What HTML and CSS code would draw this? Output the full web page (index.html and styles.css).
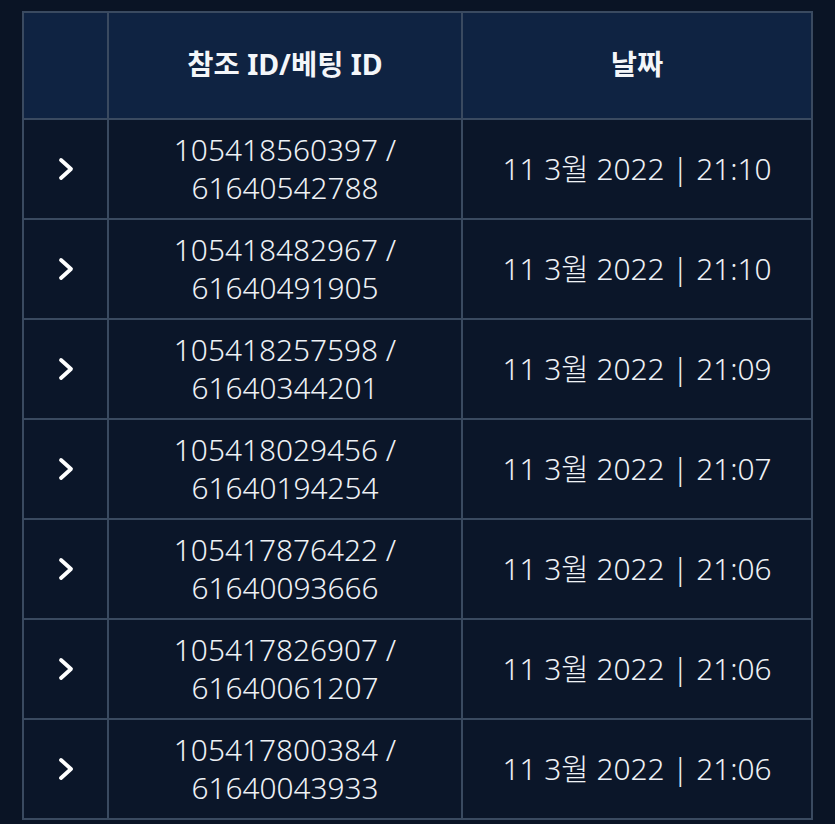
FILE: index.html
```html
<!DOCTYPE html>
<html lang="ko">
<head>
  <meta charset="UTF-8" />
  <meta name="viewport" content="width=device-width, initial-scale=1.0" />
  <title>베팅 내역</title>
  <link rel="stylesheet" href="styles.css">
</head>
<body>
  <div class="wrap">
    <table class="bets">
      <thead>
        <tr>
          <th class="col-toggle"></th>
          <th class="col-id">참조 ID/베팅 ID</th>
          <th class="col-date">날짜</th>
        </tr>
      </thead>
      <tbody>
        <tr>
          <td class="toggle"><svg viewBox="0 0 16 24" width="16" height="24"><path d="M3 3 L13 12 L3 21" /></svg></td>
          <td>105418560397 /<br>61640542788</td>
          <td>11 3월 2022 | 21:10</td>
        </tr>
        <tr>
          <td class="toggle"><svg viewBox="0 0 16 24" width="16" height="24"><path d="M3 3 L13 12 L3 21" /></svg></td>
          <td>105418482967 /<br>61640491905</td>
          <td>11 3월 2022 | 21:10</td>
        </tr>
        <tr>
          <td class="toggle"><svg viewBox="0 0 16 24" width="16" height="24"><path d="M3 3 L13 12 L3 21" /></svg></td>
          <td>105418257598 /<br>61640344201</td>
          <td>11 3월 2022 | 21:09</td>
        </tr>
        <tr>
          <td class="toggle"><svg viewBox="0 0 16 24" width="16" height="24"><path d="M3 3 L13 12 L3 21" /></svg></td>
          <td>105418029456 /<br>61640194254</td>
          <td>11 3월 2022 | 21:07</td>
        </tr>
        <tr>
          <td class="toggle"><svg viewBox="0 0 16 24" width="16" height="24"><path d="M3 3 L13 12 L3 21" /></svg></td>
          <td>105417876422 /<br>61640093666</td>
          <td>11 3월 2022 | 21:06</td>
        </tr>
        <tr>
          <td class="toggle"><svg viewBox="0 0 16 24" width="16" height="24"><path d="M3 3 L13 12 L3 21" /></svg></td>
          <td>105417826907 /<br>61640061207</td>
          <td>11 3월 2022 | 21:06</td>
        </tr>
        <tr>
          <td class="toggle"><svg viewBox="0 0 16 24" width="16" height="24"><path d="M3 3 L13 12 L3 21" /></svg></td>
          <td>105417800384 /<br>61640043933</td>
          <td>11 3월 2022 | 21:06</td>
        </tr>
      </tbody>
    </table>
  </div>
</body>
</html>
```

FILE: styles.css
```css
* {
  box-sizing: border-box;
  margin: 0;
  padding: 0;
}

body {
  font-family: "Noto Sans", "Noto Sans CJK KR", sans-serif;
  background: #0a1425;
  color: #f2f4f7;
  height: 100vh;
  overflow: hidden;
}

.wrap {
  padding: 11px 22px 0 22px;
}

.bets {
  width: 791px;
  border-collapse: collapse;
  table-layout: fixed;
  text-align: center;
}

.bets th,
.bets td {
  border: 2px solid #3a4a60;
}

.bets th {
  background: #0f2342;
  height: 107px;
  font-size: 28.5px;
  line-height: 38px;
  font-weight: bold;
  color: #f4f6f9;
  padding-bottom: 4px;
}

.col-toggle {
  width: 85px;
}

.col-id {
  width: 354px;
}

.bets td {
  background: #0b1629;
  height: 100px;
  font-size: 29.8px;
  line-height: 38px;
  font-weight: 300;
  color: #eef1f5;
}

.toggle svg {
  display: block;
  margin: 0 auto;
  fill: none;
  stroke: #ffffff;
  stroke-width: 3.8;
  stroke-linecap: round;
  stroke-linejoin: round;
}
```
